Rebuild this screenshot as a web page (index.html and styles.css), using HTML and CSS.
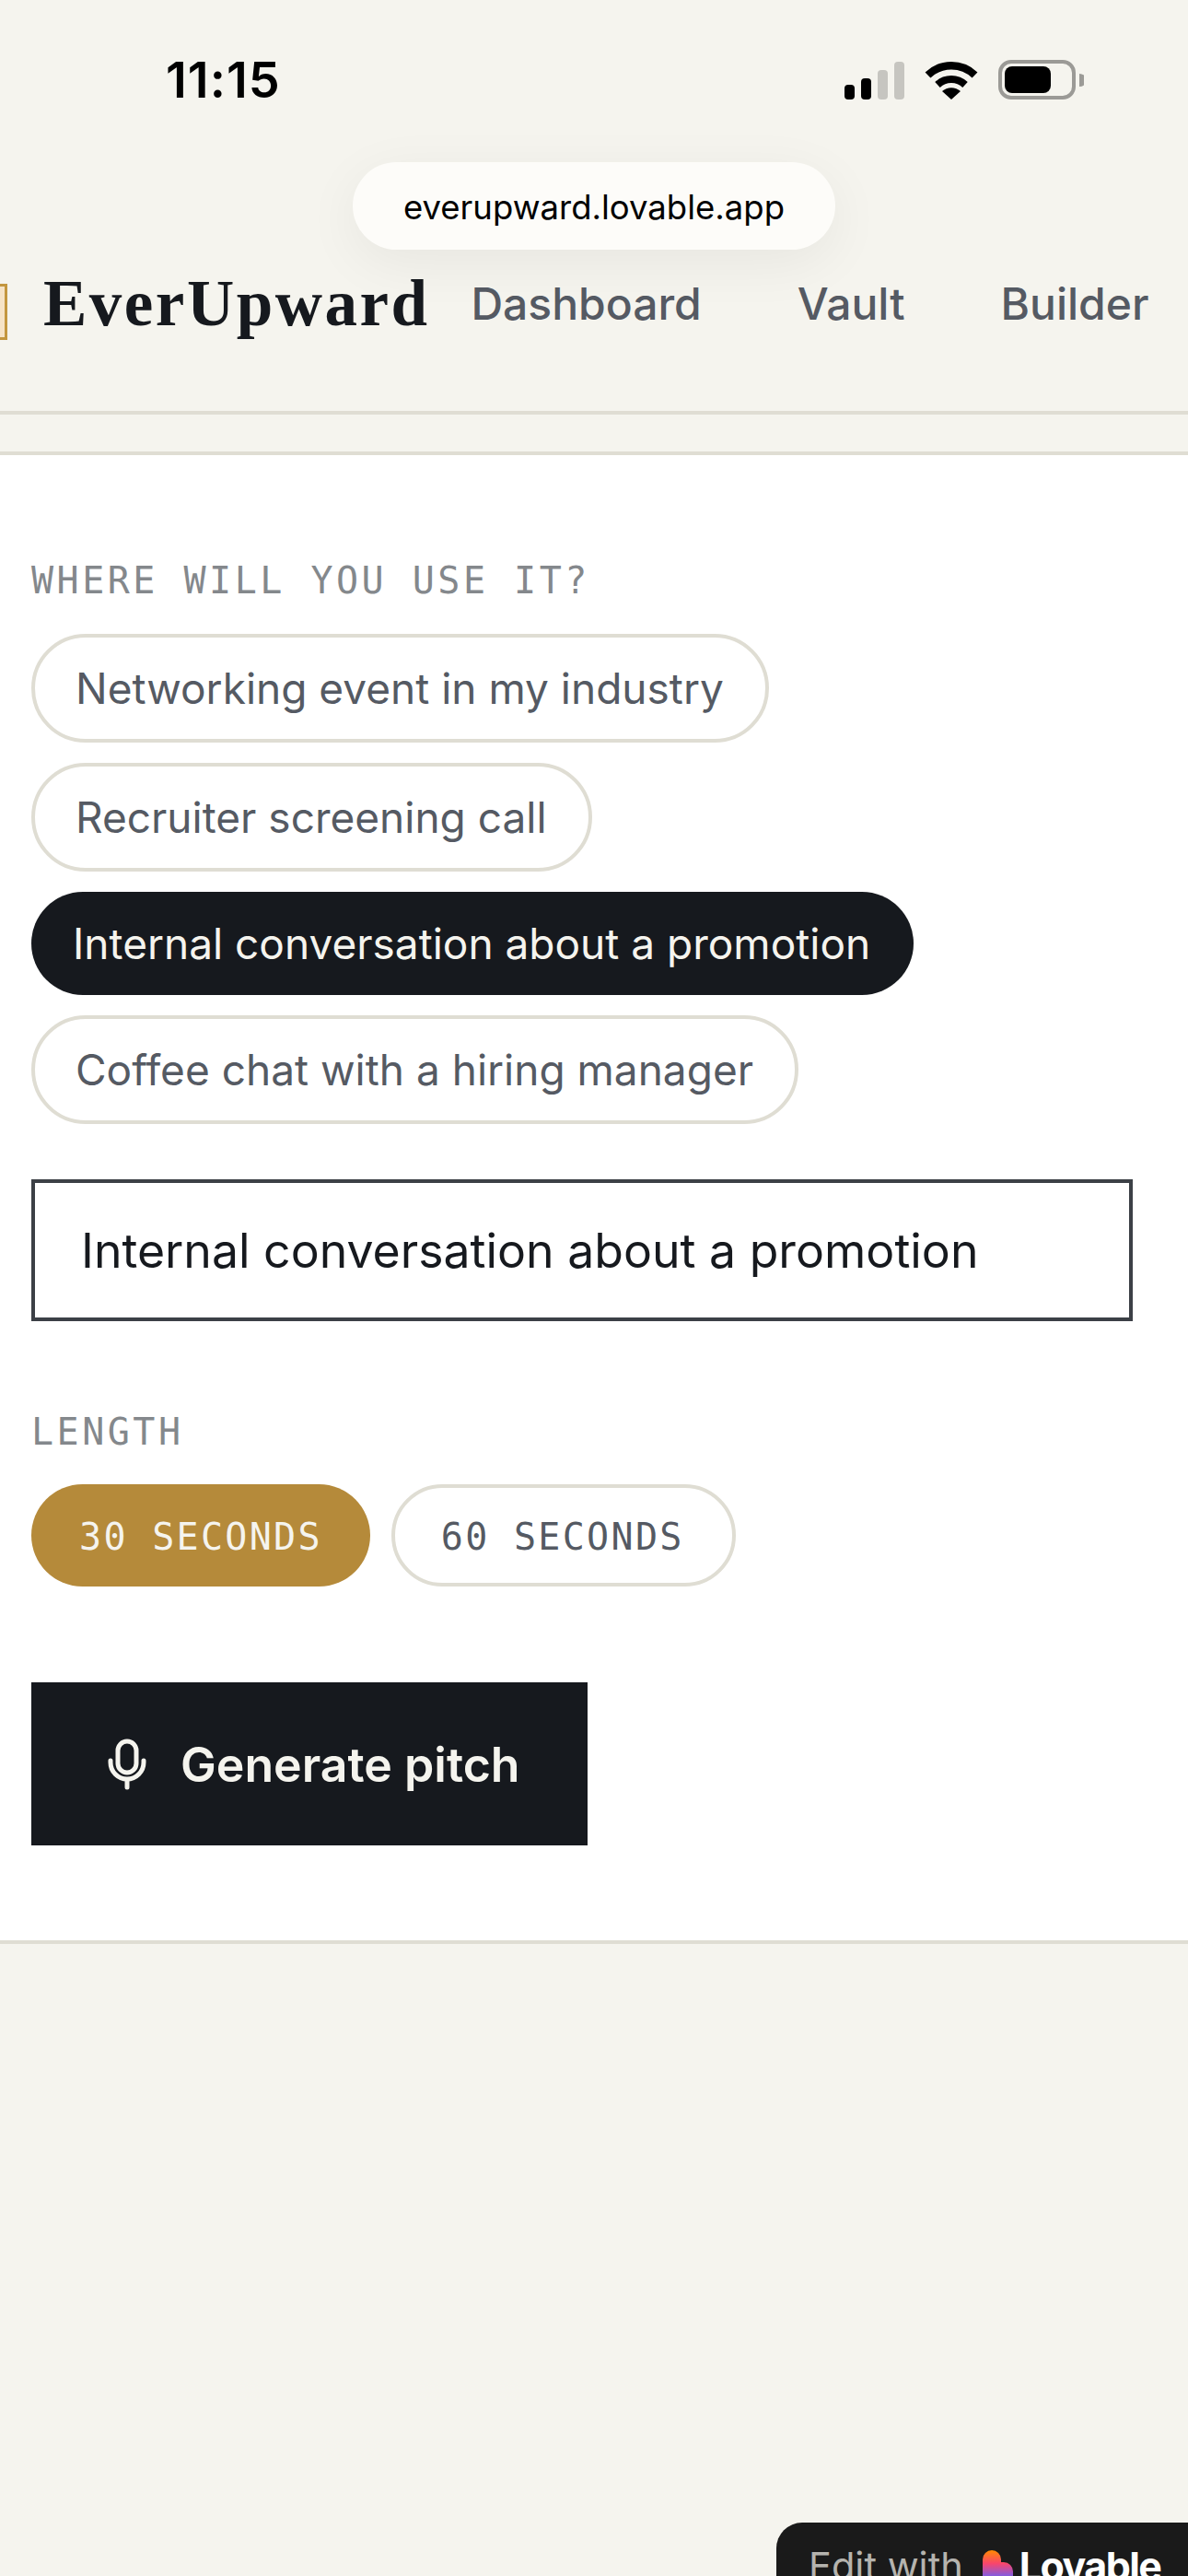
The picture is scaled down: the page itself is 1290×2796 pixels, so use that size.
FILE: index.html
```html
<!DOCTYPE html>
<html lang="en">
<head>
    <meta charset="UTF-8">
    <meta name="viewport" content="width=device-width, initial-scale=1.0">
    <title>EverUpward</title>
    <link rel="stylesheet" href="styles.css">
</head>
<body>

<div class="status-bar">
    <span class="time">11:15</span>
    <div class="status-icons">
        <svg class="signal" width="65" height="41" viewBox="0 0 65 41">
            <rect x="0" y="25" width="11" height="16" rx="4" fill="#000"/>
            <rect x="18" y="18" width="11" height="23" rx="4" fill="#000"/>
            <rect x="36" y="9" width="11" height="32" rx="4" fill="#c6c5c0"/>
            <rect x="54" y="0" width="11" height="41" rx="4" fill="#c6c5c0"/>
        </svg>
        <svg class="wifi" width="58" height="42" viewBox="0 0 58 42">
            <path d="M3.5 15.5 A37 37 0 0 1 54.5 15.5" fill="none" stroke="#000" stroke-width="8.5"/>
            <path d="M14 26 A22 22 0 0 1 44 26" fill="none" stroke="#000" stroke-width="8"/>
            <path d="M29 42 L19 33 A15 15 0 0 1 39 33 Z" fill="#000"/>
        </svg>
        <svg class="battery" width="93" height="43" viewBox="0 0 93 43">
            <rect x="2" y="2" width="80" height="39" rx="12" fill="none" stroke="#9b9a96" stroke-width="4"/>
            <rect x="7" y="7" width="50" height="29" rx="8" fill="#000"/>
            <path d="M88 15 A8 7 0 0 1 88 29 Z" fill="#9b9a96"/>
        </svg>
    </div>
</div>

<div class="url-pill">everupward.lovable.app</div>

<header class="site-header">
    <span class="logo-mark"></span>
    <span class="brand">EverUpward</span>
    <nav class="nav">
        <a>Dashboard</a>
        <a>Vault</a>
        <a>Builder</a>
    </nav>
</header>

<div class="strip"></div>

<main class="card">
    <div class="label">WHERE WILL YOU USE IT?</div>
    <div class="pills">
        <button class="pill">Networking event in my industry</button>
        <button class="pill">Recruiter screening call</button>
        <button class="pill pill-active">Internal conversation about a promotion</button>
        <button class="pill">Coffee chat with a hiring manager</button>
    </div>

    <input class="custom-input" type="text" value="Internal conversation about a promotion">

    <div class="label label-length">LENGTH</div>
    <div class="lengths">
        <button class="length length-active">30 SECONDS</button>
        <button class="length">60 SECONDS</button>
    </div>

    <button class="generate">
        <svg width="42" height="56" viewBox="0 0 42 56" fill="none" stroke="#f5f4ee" stroke-width="5" stroke-linecap="round">
            <rect x="11" y="3" width="20" height="34" rx="10"/>
            <path d="M3 24 v2 a18 18 0 0 0 36 0 v-2"/>
            <path d="M21 45 v8"/>
        </svg>
        Generate pitch
    </button>
</main>

<div class="edit-badge">
    <span class="edit-text">Edit with</span>
    <svg class="heart" width="33" height="36" viewBox="0 0 33 36">
        <defs>
            <linearGradient id="heartFill" x1="0" y1="0" x2="0" y2="1">
                <stop offset="0" stop-color="#ff8a00"/>
                <stop offset="0.4" stop-color="#f9456c"/>
                <stop offset="0.75" stop-color="#8a5ad8"/>
            </linearGradient>
        </defs>
        <path d="M0 10 A10 10 0 0 1 20 10 V13 H23 A10 10 0 0 1 33 23 V36 H0 Z" fill="url(#heartFill)"/>
    </svg>
    <span class="edit-brand">Lovable</span>
</div>

</body>
</html>
```

FILE: styles.css
```css
html, body {
    margin: 0;
    padding: 0;
}

body {
    position: relative;
    width: 1290px;
    height: 2796px;
    overflow: hidden;
    background-color: #f5f4ee;
    font-family: Inter, "Noto Sans", sans-serif;
    color: #16191e;
}

button {
    font-family: inherit;
    cursor: pointer;
}

.status-bar {
    display: flex;
    justify-content: space-between;
    align-items: flex-start;
    height: 260px;
    padding: 65px 113px 0 180px;
    box-sizing: border-box;
}

.time {
    font-size: 54px;
    font-weight: 600;
    line-height: 44px;
    letter-spacing: 1px;
    color: #000;
}

.status-icons {
    display: flex;
    align-items: flex-end;
    gap: 22px;
}

.url-pill {
    position: absolute;
    top: 176px;
    left: 383px;
    width: 524px;
    height: 95px;
    line-height: 99px;
    text-align: center;
    border-radius: 48px;
    background-color: #fdfcf9;
    font-size: 36.5px;
    color: #000;
    box-shadow: 0 14px 60px rgba(0, 0, 0, 0.06);
}

.site-header {
    display: flex;
    align-items: center;
    height: 190px;
    padding-bottom: 48px;
    box-sizing: border-box;
    border-bottom: 4px solid #dfddd3;
    overflow: hidden;
}

.logo-mark {
    width: 5px;
    height: 55px;
    margin-top: 18px;
    margin-right: 39px;
    background-color: #f6e3c6;
    border: 3px solid #c3963f;
    border-left: none;
}

.brand {
    font-family: "Liberation Serif", serif;
    font-weight: 700;
    font-size: 71px;
    letter-spacing: 2.5px;
    margin-right: 45px;
    color: #16191e;
}

.nav {
    display: flex;
    gap: 104px;
    font-size: 48px;
    font-weight: 500;
    color: #555a63;
}

.strip {
    height: 40px;
}

.card {
    height: 1620px;
    box-sizing: border-box;
    background-color: #fff;
    border-top: 4px solid #dfddd3;
    border-bottom: 4px solid #dfddd3;
    padding: 112px 34px 0;
}

.label {
    font-family: "DejaVu Sans Mono", monospace;
    font-size: 40px;
    line-height: 48px;
    letter-spacing: 3.5px;
    color: #84888c;
}

.pills {
    display: flex;
    flex-direction: column;
    align-items: flex-start;
    gap: 22px;
    margin-top: 34px;
}

.pill {
    height: 118px;
    padding: 0 45px 0 44px;
    border: 4px solid #dfddd3;
    border-radius: 59px;
    background-color: #fff;
    font-size: 46px;
    color: #555a63;
}

.pill-active {
    height: 112px;
    border: none;
    padding: 0 47px 0 45px;
    background-color: #16191e;
    color: #f5f4ee;
}

.custom-input {
    display: block;
    width: 1196px;
    height: 154px;
    margin-top: 60px;
    padding: 0 50px;
    box-sizing: border-box;
    border: 4px solid #3c4046;
    border-radius: 0;
    outline: none;
    font-family: inherit;
    font-size: 51.75px;
    color: #16191e;
}

.label-length {
    margin-top: 96px;
}

.lengths {
    display: flex;
    gap: 23px;
    margin-top: 33px;
}

.length {
    height: 111px;
    padding: 2px 52px 0 50px;
    border: 4px solid #dfddd3;
    border-radius: 56px;
    background-color: #fff;
    font-family: "DejaVu Sans Mono", monospace;
    font-size: 40px;
    letter-spacing: 2.3px;
    color: #555a63;
}

.length-active {
    border: none;
    padding: 2px 52px 0;
    background-color: #b58a3a;
    color: #f5f4ee;
}

.generate {
    display: flex;
    align-items: center;
    gap: 37px;
    width: 604px;
    height: 177px;
    margin-top: 104px;
    padding: 0 0 0 83px;
    border: none;
    background-color: #16191e;
    font-size: 51.8px;
    font-weight: 600;
    color: #f5f4ee;
}

.edit-badge {
    position: absolute;
    top: 2738px;
    left: 843px;
    right: 0;
    bottom: 0;
    display: flex;
    align-items: flex-start;
    overflow: hidden;
    padding: 21px 0 0 35px;
    border-radius: 28px 0 0 0;
    background-color: #1a1a1a;
    white-space: nowrap;
}

.edit-text {
    font-size: 41.5px;
    line-height: 52px;
    color: #b5b3ae;
}

.heart {
    flex: none;
    margin: 9px 7px 0 21px;
}

.edit-brand {
    font-size: 43px;
    line-height: 52px;
    font-weight: 700;
    letter-spacing: -1.6px;
    color: #fff;
}
```
